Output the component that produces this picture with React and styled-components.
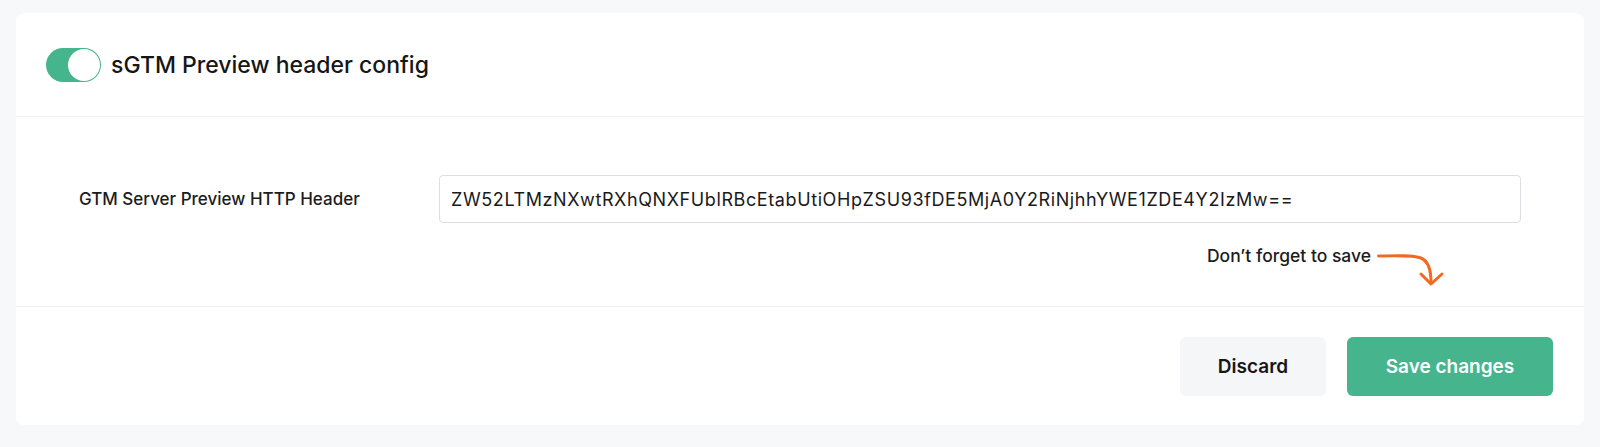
import React, { useState } from 'react'
import styled, { createGlobalStyle } from 'styled-components'

const GlobalStyle = createGlobalStyle`
  * { box-sizing: border-box; }
  body {
    margin: 0;
    background: #f7f8fa;
    font-family: Inter, "Noto Sans", "Liberation Sans", sans-serif;
    color: #1a1a1a;
  }
`

const Page = styled.div`
  padding: 13px 16px 23px 16px;
`

const Card = styled.div`
  background: #ffffff;
  border-radius: 8px;
`

const Header = styled.div`
  display: flex;
  align-items: center;
  gap: 10px;
  height: 104px;
  padding: 0 30px;
  border-bottom: 1px solid #f0f1f3;
`

const Toggle = styled.button`
  position: relative;
  width: 55px;
  height: 34px;
  border: none;
  border-radius: 17px;
  padding: 0;
  background: ${p => (p.$on ? '#46b48c' : '#d5d8dd')};
  cursor: pointer;
  &::after {
    content: '';
    position: absolute;
    top: 1px;
    left: ${p => (p.$on ? '22px' : '1px')};
    width: 32px;
    height: 32px;
    border-radius: 50%;
    background: #ffffff;
    transition: left 0.15s;
  }
`

const Title = styled.h2`
  margin: 0;
  font-size: 23px;
  font-weight: 500;
  color: #161616;
`

const Body = styled.div`
  padding: 58px 63px 0 63px;
  height: 190px;
  border-bottom: 1px solid #f0f1f3;
`

const FieldRow = styled.div`
  display: grid;
  grid-template-columns: 360px 1fr;
  align-items: center;
`

const Label = styled.label`
  font-size: 17px;
  font-weight: 500;
  color: #1c1c1c;
`

const Input = styled.input`
  height: 48px;
  width: 100%;
  border: 1px solid #dcdee2;
  border-radius: 4px;
  padding: 0 11px;
  font-family: inherit;
  font-size: 18px;
  letter-spacing: 0.6px;
  color: #1a1a1a;
  outline: none;
`

const Reminder = styled.div`
  display: flex;
  justify-content: flex-end;
  align-items: flex-start;
  gap: 6px;
  margin-top: 22px;
  padding-right: 76px;
`

const ReminderText = styled.span`
  font-size: 17.5px;
  font-weight: 500;
  color: #1c1c1c;
  line-height: 22px;
`

const Footer = styled.div`
  display: flex;
  justify-content: flex-end;
  gap: 21px;
  padding: 30px 31px 29px 0;
`

const Button = styled.button`
  height: 59px;
  padding: 0;
  width: ${p => p.$width}px;
  border: none;
  border-radius: 6px;
  font-family: inherit;
  font-size: 19px;
  font-weight: 600;
  cursor: pointer;
  background: ${p => (p.$primary ? '#46b48c' : '#f5f6f8')};
  color: ${p => (p.$primary ? '#ffffff' : '#161616')};
`

function Arrow() {
  return (
    <svg width="68" height="42" viewBox="0 0 68 42" fill="none">
      <path d="M1.5 11 C20 10.5 36 10 44 13 C51 16 54 25 54 37" stroke="#f26a21" strokeWidth="3" strokeLinecap="round" />
      <path d="M44 29 L54 39 L65 29" stroke="#f26a21" strokeWidth="3" strokeLinecap="round" strokeLinejoin="round" />
    </svg>
  )
}

export default function App() {
  const [on, setOn] = useState(true)
  const [value, setValue] = useState('ZW52LTMzNXwtRXhQNXFUblRBcEtabUtiOHpZSU93fDE5MjA0Y2RiNjhhYWE1ZDE4Y2IzMw==')

  return (
    <Page>
      <GlobalStyle />
      <Card>
        <Header>
          <Toggle $on={on} onClick={() => setOn(!on)} aria-label="toggle" />
          <Title>sGTM Preview header config</Title>
        </Header>
        <Body>
          <FieldRow>
            <Label>GTM Server Preview HTTP Header</Label>
            <Input value={value} onChange={e => setValue(e.target.value)} />
          </FieldRow>
          <Reminder>
            <ReminderText>Don’t forget to save</ReminderText>
            <Arrow />
          </Reminder>
        </Body>
        <Footer>
          <Button $width={146}>Discard</Button>
          <Button $width={206} $primary>Save changes</Button>
        </Footer>
      </Card>
    </Page>
  )
}
